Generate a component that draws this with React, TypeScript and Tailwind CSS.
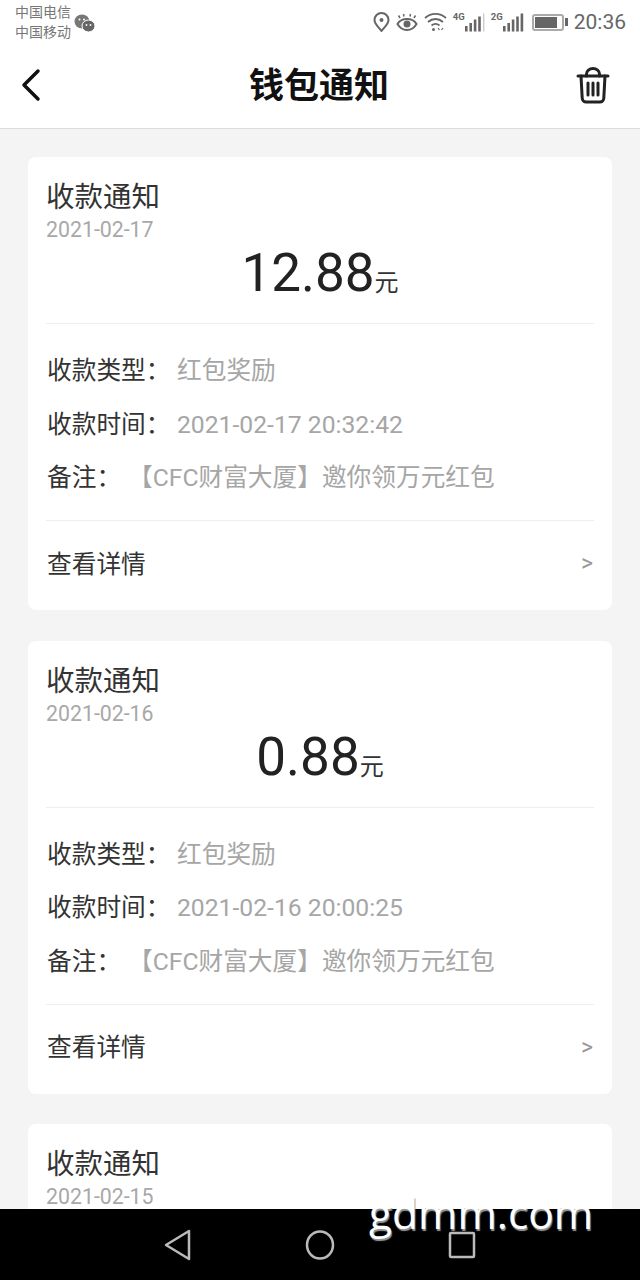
function Bars({ label, dim }: { label: string; dim?: boolean }) {
  return (
    <div className="relative w-[33px] h-[20px]">
      <span className="absolute left-0 top-0 text-[9.5px] leading-[10px] font-bold text-[#666]">{label}</span>
      <svg width="33" height="20" viewBox="0 0 33 20" className="absolute left-0 top-0">
        <rect x="12" y="14" width="2.6" height="5.5" fill="#666" />
        <rect x="16.4" y="11" width="2.6" height="8.5" fill="#666" />
        <rect x="20.8" y="7.5" width="2.6" height="12" fill="#666" />
        <rect x="25.2" y="4.5" width="2.6" height="15" fill="#666" />
        {dim ? (
          <rect x="30" y="1.5" width="1.4" height="18" fill="#ccc" />
        ) : (
          <rect x="29.6" y="1.5" width="2.6" height="18" fill="#666" />
        )}
      </svg>
    </div>
  );
}

function StatusBar() {
  return (
    <div className="h-[44px] flex items-center justify-between pl-[15px] pr-[14px] text-[#666]">
      <div className="flex items-center gap-[3px]">
        <div className="text-[14px] leading-[20px] text-[#777]">
          <div>中国电信</div>
          <div>中国移动</div>
        </div>
        <svg width="21" height="19" viewBox="0 0 21 19" className="mt-[2px]">
          <ellipse cx="8" cy="7.5" rx="7.5" ry="7" fill="#777" />
          <ellipse cx="14.5" cy="12" rx="6.5" ry="6" fill="#666" stroke="#fff" strokeWidth="1" />
          <circle cx="5.5" cy="5.5" r="1" fill="#fff" />
          <circle cx="10" cy="5.5" r="1" fill="#fff" />
          <circle cx="12.5" cy="11" r="0.9" fill="#fff" />
          <circle cx="16.5" cy="11" r="0.9" fill="#fff" />
        </svg>
      </div>
      <div className="flex items-center gap-[6px]">
        <svg width="17" height="20" viewBox="0 0 17 20" fill="none" stroke="#666" strokeWidth="2">
          <path d="M8.5 19c-3-4-7-7-7-11a7 7 0 0 1 14 0c0 4-4 7-7 11z" />
          <circle cx="8.5" cy="8" r="2" fill="#666" stroke="none" />
        </svg>
        <svg width="22" height="20" viewBox="0 0 22 20" fill="none" stroke="#666" strokeWidth="2">
          <path d="M1.5 12c2-3.5 5.5-5 9.5-5s7.5 1.5 9.5 5c-2 3.5-5.5 6-9.5 6s-7.5-2.5-9.5-6z" />
          <circle cx="11" cy="12" r="3.5" fill="#666" stroke="none" />
          <path d="M4 6 2.5 3.5M8 4.5 7.5 2M14 4.5l.5-2.5M18 6l1.5-2.5" strokeWidth="1.5" />
        </svg>
        <svg width="23" height="20" viewBox="0 0 23 20" fill="none" stroke="#666" strokeWidth="1.8">
          <path d="M1 6c6-5.5 15-5.5 21 0M4 10c4.5-4 10.500-4 15 0M7.5 13.5c2.5-2 5.5-2 8 0" />
          <circle cx="9.5" cy="17.5" r="1.5" fill="#666" stroke="none" />
          <path d="M14 16l1.5 2M19 16l-1.5 2" strokeWidth="1.2" />
        </svg>
        <Bars label="4G" dim />
        <div className="ml-[-1px]">
          <Bars label="2G" />
        </div>
        <div className="ml-[2px] flex items-center">
          <div className="w-[32px] h-[17px] rounded-[3px] border-2 border-[#aaa] p-[1px]">
            <div className="w-[22px] h-full bg-[#666]" />
          </div>
          <div className="w-[3px] h-[8px] bg-[#666] ml-[1px]" />
        </div>
        <span className="text-[21px] leading-[28px] text-[#666]">20:36</span>
      </div>
    </div>
  );
}

function Header() {
  return (
    <div className="h-[85px] flex items-center justify-between border-b border-[#dcdcdc] bg-white pl-[13px] pr-[30px] pt-[3px]">
      <svg width="38" height="38" viewBox="0 0 38 38" fill="none" stroke="#111" strokeWidth="3.5" strokeLinecap="round" strokeLinejoin="round" className="mt-[-5px]">
        <path d="M25 5 11 19l14 14" />
      </svg>
      <h1 className="text-[35px] font-bold text-[#111] ml-[11px]">钱包通知</h1>
      <svg width="34" height="37" viewBox="0 0 34 37" fill="none" stroke="#222" strokeWidth="3" strokeLinecap="round" strokeLinejoin="round" className="mt-[-5px]">
        <path d="M2 9h30" />
        <path d="M10.5 9V7a6.5 5.5 0 0 1 13 0v2" />
        <path d="M5 9l1.2 22a4 4 0 0 0 4 4h13.6a4 4 0 0 0 4-4L29 9" />
        <path d="M12 16v12M17 16v12M22 16v12" />
      </svg>
    </div>
  );
}

function Row({ label, value, indent }: { label: string; value: string; indent?: boolean }) {
  return (
    <div className="flex items-center h-[53.5px] px-[1px] text-[24.7px]">
      <span className="text-[#333] w-[130px] shrink-0">{label}</span>
      <span className={indent ? 'text-[#a6a6a6] ml-[-49px]' : 'text-[#a6a6a6]'}>{value}</span>
    </div>
  );
}

function CardTitle({ date }: { date: string }) {
  return (
    <>
      <div className="text-[28.5px] leading-[36px] text-[#333]">收款通知</div>
      <div className="text-[21.3px] leading-[28px] text-[#a8a8a8]">{date}</div>
    </>
  );
}

function Card({ date, amount, time }: { date: string; amount: string; time: string }) {
  return (
    <div className="bg-white rounded-[8px] px-[18px] shrink-0 h-[453px]">
      <div className="h-[167px] border-b border-[#eee] pt-[23px]">
        <CardTitle date={date} />
        <div className="flex items-baseline justify-center leading-[60px] text-[#222] mt-[-1px]">
          <span className="text-[53px]">{amount}</span>
          <span className="text-[24px] text-[#333]">元</span>
        </div>
      </div>
      <div className="h-[197px] border-b border-[#eee] pt-[20px]">
        <Row label="收款类型：" value="红包奖励" />
        <Row label="收款时间：" value={time} />
        <Row label="备注：" value="【CFC财富大厦】邀你领万元红包" indent />
      </div>
      <div className="h-[89px] flex items-center justify-between px-[1px] pb-[2px] text-[24.7px] text-[#333]">
        <span>查看详情</span>
        <span className="text-[23px] text-[#999]">&gt;</span>
      </div>
    </div>
  );
}

export default function App() {
  return (
    <div className="font-['Roboto','Noto_Sans_CJK_SC',sans-serif] w-[640px] h-[1280px] relative overflow-hidden flex flex-col bg-[#f4f4f4]">
      <div className="bg-white">
        <StatusBar />
        <Header />
      </div>
      <div className="flex-1 min-h-0 overflow-hidden px-[28px] pt-[28px] flex flex-col gap-[30.5px]">
        <Card date="2021-02-17" amount="12.88" time="2021-02-17 20:32:42" />
        <Card date="2021-02-16" amount="0.88" time="2021-02-16 20:00:25" />
        <div className="bg-white rounded-t-[8px] px-[18px] pt-[23px] flex-1">
          <CardTitle date="2021-02-15" />
        </div>
      </div>
      <div className="h-[71px] bg-black shrink-0 flex items-center justify-center gap-[113px]">
        <svg width="28" height="32" viewBox="0 0 28 32" fill="none" stroke="#bbb" strokeWidth="2.5" strokeLinejoin="round">
          <path d="M25 2v28L2 16z" />
        </svg>
        <svg width="30" height="30" viewBox="0 0 30 30" fill="none" stroke="#bbb" strokeWidth="2.5">
          <ellipse cx="15" cy="15" rx="13" ry="13.5" />
        </svg>
        <svg width="28" height="28" viewBox="0 0 28 28" fill="none" stroke="#bbb" strokeWidth="2.5">
          <rect x="2" y="2" width="24" height="24" rx="1" />
        </svg>
      </div>
      <span className="absolute left-[369px] top-[1186px] font-['Open_Sans',sans-serif] text-[42.5px] font-medium leading-[54px] text-white [text-shadow:1px_2px_1px_#999]">
        gdmm.com
      </span>
    </div>
  );
}
